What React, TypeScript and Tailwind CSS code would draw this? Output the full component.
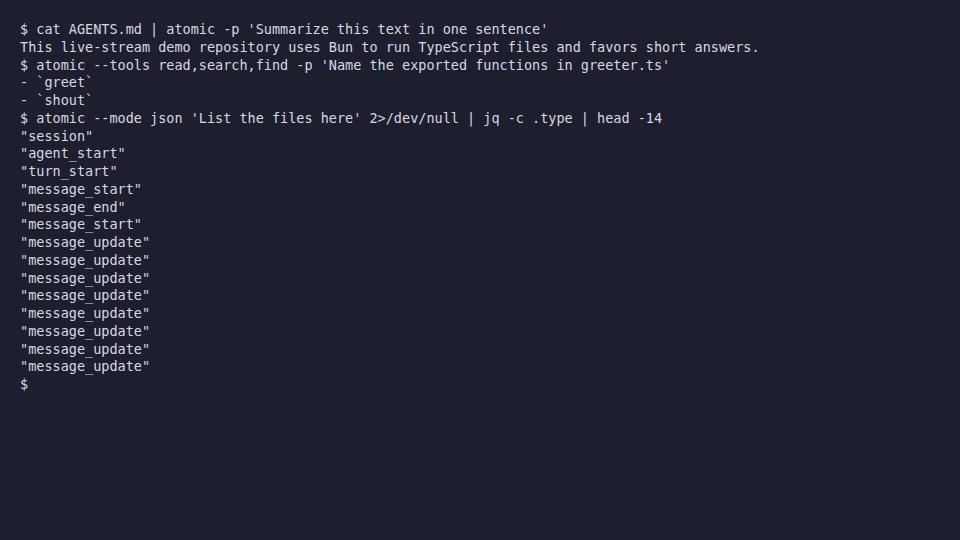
import React from "react";

const lines = [
  "$ cat AGENTS.md | atomic -p 'Summarize this text in one sentence'",
  "This live-stream demo repository uses Bun to run TypeScript files and favors short answers.",
  "$ atomic --tools read,search,find -p 'Name the exported functions in greeter.ts'",
  "- `greet`",
  "- `shout`",
  "$ atomic --mode json 'List the files here' 2>/dev/null | jq -c .type | head -14",
  '"session"',
  '"agent_start"',
  '"turn_start"',
  '"message_start"',
  '"message_end"',
  '"message_start"',
  '"message_update"',
  '"message_update"',
  '"message_update"',
  '"message_update"',
  '"message_update"',
  '"message_update"',
  '"message_update"',
  '"message_update"',
  "$",
];

export default function App() {
  return (
    <div className="w-[960px] h-[540px] bg-[#1e1f2e] text-[#d6d9e4] px-[20px] pt-[21px] text-[13.5px] leading-[17.75px] whitespace-pre font-['DejaVu_Sans_Mono','Liberation_Mono',monospace] flex flex-col">
      {lines.map((l, i) => (
        <div key={i}>{l}</div>
      ))}
    </div>
  );
}
